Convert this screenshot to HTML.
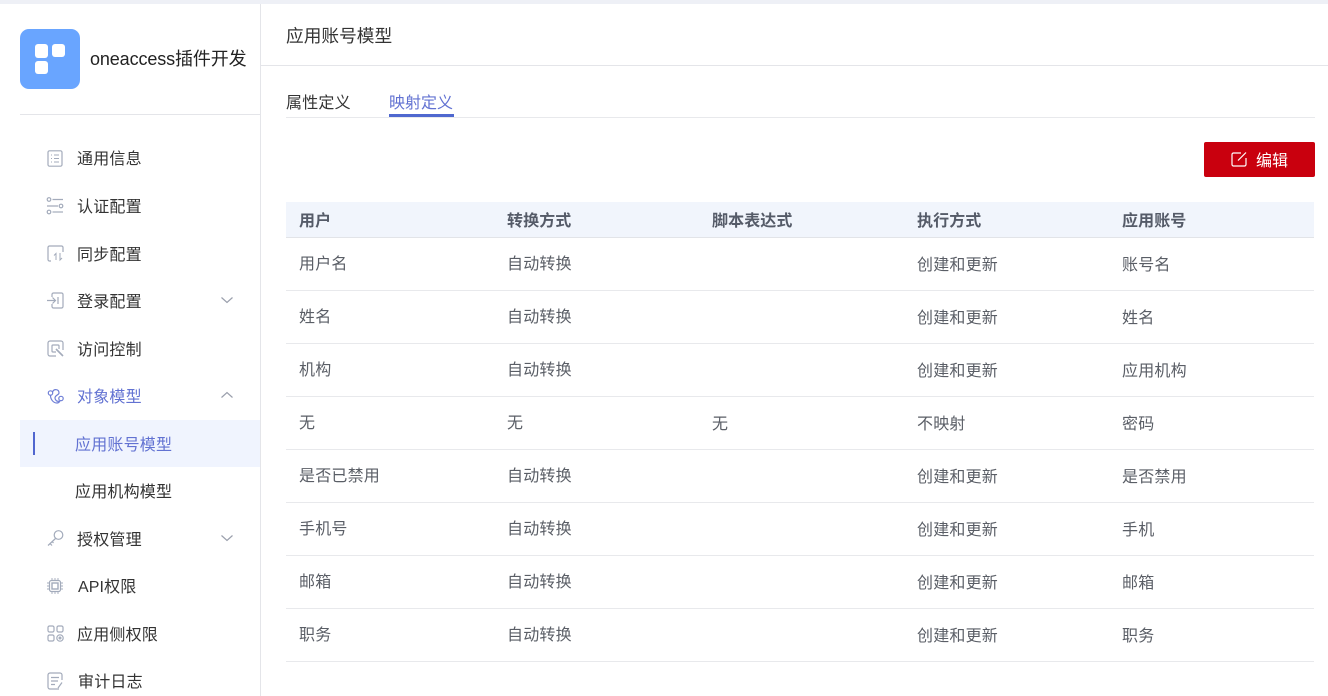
<!DOCTYPE html>
<html lang="zh"><head><meta charset="utf-8"><style>
*{box-sizing:border-box}
html,body{margin:0;padding:0;width:1328px;height:696px;overflow:hidden;background:#fff}
body{position:relative;font-family:"Liberation Sans","Noto Sans CJK SC",sans-serif;font-size:16px;color:#333}
.a{position:absolute;white-space:nowrap}
.n{position:absolute;left:77px;height:24px;line-height:24px;margin-top:1px;letter-spacing:.2px;white-space:nowrap;color:#333}
svg{position:absolute;overflow:visible;fill:none;stroke:#a3abbb;stroke-width:1.2}
.t{position:absolute;height:24px;line-height:24px;margin-top:2px;letter-spacing:.2px;white-space:nowrap;color:#5a5e66;font-size:16px}
.h{position:absolute;top:210px;height:24px;line-height:24px;letter-spacing:.1px;white-space:nowrap;color:#555b68;font-weight:700;font-size:16px}
.l{position:absolute;left:286px;width:1028px;height:1px;background:#e8e9ec}
</style></head><body>
<div class="a" style="left:0;top:0;width:1328px;height:4px;background:#eef0f6"></div>
<div class="a" style="left:260px;top:4px;width:1px;height:692px;background:#e4e5e9"></div>
<div class="a" style="left:261px;top:65px;width:1067px;height:1px;background:#e4e5e9"></div>
<div class="a" style="left:20px;top:114px;width:240px;height:1px;background:#e4e5e9"></div>

<div class="a" style="left:20px;top:29px;width:60px;height:60px;border-radius:9px;background:#69a5ff"></div>
<div class="a" style="left:35px;top:44px;width:13px;height:14px;border-radius:3px;background:#fff"></div>
<div class="a" style="left:52px;top:44px;width:13px;height:13px;border-radius:3px;background:#fff"></div>
<div class="a" style="left:35px;top:61px;width:13px;height:13px;border-radius:3px;background:#fff"></div>
<div class="a" style="left:90px;top:46px;font-size:18px;line-height:27px;letter-spacing:-.12px;color:#222">oneaccess插件开发</div>

<svg style="left:47px;top:150px" width="16" height="17" viewBox="0 0 16 17"><rect x="1" y=".8" width="14" height="15.4" rx="1.500"/><path d="M4 5h1M7 5h5M4 8.500h1M7 8.500h5M4 12h1M7 12h5" stroke-width="1"/></svg>
<div class="n" style="top:147px">通用信息</div>
<svg style="left:46px;top:197px" width="18" height="18" viewBox="0 0 18 18"><circle cx="3" cy="2.500" r="1.800"/><path d="M6.500 2.500H17M1 9h11"/><circle cx="15" cy="9" r="1.800"/><circle cx="3" cy="15" r="1.800"/><path d="M6.500 15H17"/></svg>
<div class="n" style="top:195px">认证配置</div>
<svg style="left:47px;top:245px" width="17" height="17" viewBox="0 0 17 17"><path d="M4 16H2.500A1.500 1.500 0 0 1 1 14.500V2.500A1.500 1.500 0 0 1 2.500 1h12A1.500 1.500 0 0 1 16 2.500V7"/><path d="M9 15V8.500L7 10.500M13 8v7l2-2" stroke-width="1"/></svg>
<div class="n" style="top:243px">同步配置</div>
<svg style="left:47px;top:292px" width="17" height="17" viewBox="0 0 17 17"><path d="M5 5V2.500A1.500 1.500 0 0 1 6.500 1h8A1.500 1.500 0 0 1 16 2.500v12a1.500 1.500 0 0 1-1.500 1.500h-8A1.500 1.500 0 0 1 5 14.500V12"/><path d="M0 8.500h8M5.500 5.500l3 3-3 3M11 5v7"/></svg>
<div class="n" style="top:290px">登录配置</div>
<svg style="left:47px;top:340px" width="17" height="17" viewBox="0 0 17 17"><path d="M9 16H3a2 2 0 0 1-2-2V3a2 2 0 0 1 2-2h11a2 2 0 0 1 2 2v7"/><path d="M9 12H6a1 1 0 0 1-1-1V6a1 1 0 0 1 1-1h5a1 1 0 0 1 1 1v3"/><path d="M9 9l7 7" stroke-width="1.600"/></svg>
<div class="n" style="top:338px">访问控制</div>
<svg style="left:47px;top:388px;stroke:#6f7fd6" width="17" height="17" viewBox="0 0 17 17"><circle cx="3.500" cy="5" r="2.200"/><path d="M5.500 4C7 .5 12 1 12 5 12 7 8 7 8 10c0 2 2 4 4 3M3.500 7.500C3.500 11 6 15 10 15c1 0 2-.5 3-2"/><circle cx="14" cy="10.500" r="2.200"/></svg>
<div class="n" style="top:385px;color:#6272d2">对象模型</div>
<svg style="left:221px;top:297px" width="12" height="6" viewBox="0 0 12 6"><path d="M.5.500L6 5.500 11.500.500" stroke="#9a9fac"/></svg>
<svg style="left:221px;top:392px" width="12" height="6" viewBox="0 0 12 6"><path d="M.5 5.500L6 .500l5.500 5" stroke="#9a9fac"/></svg>

<div class="a" style="left:20px;top:420px;width:240px;height:47px;background:#f0f4fe"></div>
<div class="a" style="left:33px;top:432px;width:2px;height:23px;background:#5166cf"></div>
<div class="n" style="left:75px;top:433px;color:#6272d2">应用账号模型</div>
<div class="n" style="left:75px;top:480px">应用机构模型</div>

<svg style="left:47px;top:530px" width="17" height="16" viewBox="0 0 17 16"><circle cx="11.500" cy="5" r="4.300"/><path d="M8.500 8.500L1 15.500M3 13.500l2 2M5 11.500l1.500 1.500"/></svg>
<div class="n" style="top:528px">授权管理</div>
<svg style="left:221px;top:535px" width="12" height="6" viewBox="0 0 12 6"><path d="M.5.500L6 5.500 11.500.500" stroke="#9a9fac"/></svg>
<svg style="left:47px;top:578px" width="16" height="16" viewBox="0 0 16 16"><rect x="2.500" y="2.500" width="11" height="11" rx="2"/><rect x="5" y="5" width="6" height="6" stroke-width="1.400"/><path d="M5 0v2M8 0v2M11 0v2M5 14v2M8 14v2M11 14v2M0 5h2M0 8h2M0 11h2M14 5h2M14 8h2M14 11h2" stroke-width=".9"/></svg>
<div class="n" style="left:78px;top:575px;letter-spacing:.1px">API权限</div>
<svg style="left:47px;top:625px" width="17" height="17" viewBox="0 0 17 17"><rect x="1" y="1" width="6" height="6" rx="1.500"/><rect x="10" y="1" width="6" height="6" rx="1.500"/><rect x="1" y="10" width="6" height="6" rx="1.500"/><circle cx="13" cy="13" r="3.200"/><circle cx="13" cy="13" r=".9"/></svg>
<div class="n" style="top:623px">应用侧权限</div>
<svg style="left:47px;top:672px" width="17" height="18" viewBox="0 0 17 18"><path d="M12 17H3a2 2 0 0 1-2-2V3a2 2 0 0 1 2-2h10a2 2 0 0 1 2 2v5"/><path d="M4 5.500h8M4 9h7M4 12.500h4M11 16l4-5.500"/></svg>
<div class="n" style="left:78px;top:670px">审计日志</div>

<div class="a" style="left:286px;top:23px;font-size:17.7px;line-height:27px;color:#333">应用账号模型</div>
<div class="a" style="left:286px;top:92px;line-height:24px;letter-spacing:.2px;color:#333">属性定义</div>
<div class="a" style="left:389px;top:92px;line-height:24px;color:#6272d2">映射定义</div>
<div class="a" style="left:389px;top:114px;width:65px;height:3px;background:#4f68cf"></div>
<div class="l" style="top:117px;width:1029px"></div>

<div class="a" style="left:1204px;top:142px;width:111px;height:35px;border-radius:2px;background:#c9000e"></div>
<svg style="left:1231px;top:151px;stroke:#fff;stroke-width:1.200" width="17" height="17" viewBox="0 0 17 17"><path d="M10 2H2.500A1.500 1.500 0 0 0 1 3.500v10A1.500 1.500 0 0 0 2.500 15h11a1.500 1.500 0 0 0 1.500-1.500V7"/><path d="M7 9.500L15 1.500"/></svg>
<div class="a" style="left:1256px;top:150px;line-height:24px;color:#fff">编辑</div>

<div class="a" style="left:286px;top:202px;width:1028px;height:35px;background:#f1f5fc"></div>
<div class="l" style="top:237px;background:#e2e4e8"></div>
<div class="h" style="left:299px">用户</div><div class="h" style="left:507px">转换方式</div><div class="h" style="left:712px">脚本表达式</div><div class="h" style="left:917px">执行方式</div><div class="h" style="left:1122px">应用账号</div>

<div class="t" style="left:299px;top:251px">用户名</div><div class="t" style="left:507px;top:251px">自动转换</div><div class="t" style="left:917px;top:252px">创建和更新</div><div class="t" style="left:1122px;top:252px">账号名</div><div class="l" style="top:290px"></div>
<div class="t" style="left:299px;top:304px">姓名</div><div class="t" style="left:507px;top:304px">自动转换</div><div class="t" style="left:917px;top:305px">创建和更新</div><div class="t" style="left:1122px;top:305px">姓名</div><div class="l" style="top:343px"></div>
<div class="t" style="left:299px;top:357px">机构</div><div class="t" style="left:507px;top:357px">自动转换</div><div class="t" style="left:917px;top:358px">创建和更新</div><div class="t" style="left:1122px;top:358px">应用机构</div><div class="l" style="top:396px"></div>
<div class="t" style="left:299px;top:410px">无</div><div class="t" style="left:507px;top:410px">无</div><div class="t" style="left:712px;top:411px">无</div><div class="t" style="left:917px;top:411px">不映射</div><div class="t" style="left:1122px;top:411px">密码</div><div class="l" style="top:449px"></div>
<div class="t" style="left:299px;top:463px">是否已禁用</div><div class="t" style="left:507px;top:463px">自动转换</div><div class="t" style="left:917px;top:464px">创建和更新</div><div class="t" style="left:1122px;top:464px">是否禁用</div><div class="l" style="top:502px"></div>
<div class="t" style="left:299px;top:516px">手机号</div><div class="t" style="left:507px;top:516px">自动转换</div><div class="t" style="left:917px;top:517px">创建和更新</div><div class="t" style="left:1122px;top:517px">手机</div><div class="l" style="top:555px"></div>
<div class="t" style="left:299px;top:569px">邮箱</div><div class="t" style="left:507px;top:569px">自动转换</div><div class="t" style="left:917px;top:570px">创建和更新</div><div class="t" style="left:1122px;top:570px">邮箱</div><div class="l" style="top:608px"></div>
<div class="t" style="left:299px;top:622px">职务</div><div class="t" style="left:507px;top:622px">自动转换</div><div class="t" style="left:917px;top:623px">创建和更新</div><div class="t" style="left:1122px;top:623px">职务</div><div class="l" style="top:661px"></div>
</body></html>
